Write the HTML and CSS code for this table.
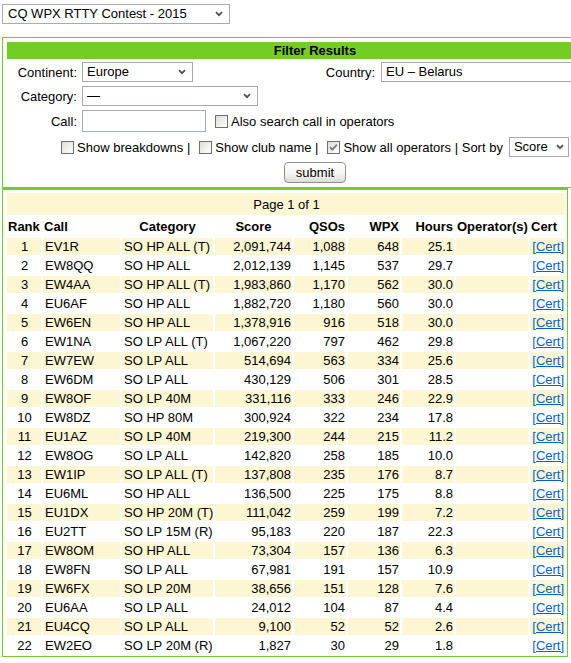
FILE: index.html
```html
<!DOCTYPE html>
<html>
<head>
<meta charset="utf-8">
<link rel="stylesheet" href="styles.css">
</head>
<body>
<div class="page">
  <div class="select sel-contest"><span>CQ WPX RTTY Contest - 2015</span><svg class="chev" width="8" height="6" viewBox="0 0 8 6"><path d="M1 1.2 L4 4.2 L7 1.2" fill="none" stroke="#505050" stroke-width="1.8"/></svg></div>

  <div class="filter">
    <div class="filter-head">Filter Results</div>
    <div class="filter-grid">
      <span class="lbl">Continent:</span>
      <div class="select sel-continent"><span>Europe</span><svg class="chev" width="8" height="6" viewBox="0 0 8 6"><path d="M1 1.2 L4 4.2 L7 1.2" fill="none" stroke="#505050" stroke-width="1.8"/></svg></div>
      <span class="lbl">Country:</span>
      <div class="select sel-country"><span>EU – Belarus</span></div>

      <span class="lbl">Category:</span>
      <div class="wide"><div class="select sel-cat"><span>—</span><svg class="chev" width="8" height="6" viewBox="0 0 8 6"><path d="M1 1.2 L4 4.2 L7 1.2" fill="none" stroke="#505050" stroke-width="1.8"/></svg></div></div>

      <span class="lbl">Call:</span>
      <div class="wide call-row"><span class="input"></span><span class="cb"></span><span>Also search call in operators</span></div>

      <div class="full options">
        <span class="cb"></span><span>Show breakdowns |</span>
        <span class="cb cb-gap"></span><span>Show club name |</span>
        <span class="cb cb-gap checked"><svg width="11" height="11" viewBox="0 0 11 11"><path d="M2 5.2 L4.3 7.6 L9 2.6" fill="none" stroke="#7a7a7a" stroke-width="1.8"/></svg></span><span>Show all operators | Sort by</span>
        <div class="select sel-sort"><span>Score</span><svg class="chev" width="8" height="6" viewBox="0 0 8 6"><path d="M1 1.2 L4 4.2 L7 1.2" fill="none" stroke="#505050" stroke-width="1.8"/></svg></div>
      </div>
      <div class="full submit-row"><span class="button">submit</span></div>
    </div>
  </div>

  <div class="results">
    <table class="res">
      <colgroup>
        <col class="c-rank"><col class="c-call"><col class="c-cat"><col class="c-score"><col class="c-qso"><col class="c-wpx"><col class="c-hrs"><col class="c-op"><col class="c-cert">
      </colgroup>
      <tr class="pagebar"><td colspan="9">Page 1 of 1</td></tr>
      <tr class="head">
        <th class="l">Rank</th><th class="l">Call</th><th>Category</th><th>Score</th><th class="r">QSOs</th><th class="r">WPX</th><th class="r">Hours</th><th>Operator(s)</th><th class="l">Cert</th>
      </tr>
      <tr class="odd"><td class="c">1</td><td>EV1R</td><td>SO HP ALL (T)</td><td class="r">2,091,744</td><td class="r">1,088</td><td class="r">648</td><td class="r">25.1</td><td></td><td class="cert"><a href="#">[Cert]</a></td></tr>
      <tr><td class="c">2</td><td>EW8QQ</td><td>SO HP ALL</td><td class="r">2,012,139</td><td class="r">1,145</td><td class="r">537</td><td class="r">29.7</td><td></td><td class="cert"><a href="#">[Cert]</a></td></tr>
      <tr class="odd"><td class="c">3</td><td>EW4AA</td><td>SO HP ALL (T)</td><td class="r">1,983,860</td><td class="r">1,170</td><td class="r">562</td><td class="r">30.0</td><td></td><td class="cert"><a href="#">[Cert]</a></td></tr>
      <tr><td class="c">4</td><td>EU6AF</td><td>SO HP ALL</td><td class="r">1,882,720</td><td class="r">1,180</td><td class="r">560</td><td class="r">30.0</td><td></td><td class="cert"><a href="#">[Cert]</a></td></tr>
      <tr class="odd"><td class="c">5</td><td>EW6EN</td><td>SO HP ALL</td><td class="r">1,378,916</td><td class="r">916</td><td class="r">518</td><td class="r">30.0</td><td></td><td class="cert"><a href="#">[Cert]</a></td></tr>
      <tr><td class="c">6</td><td>EW1NA</td><td>SO LP ALL (T)</td><td class="r">1,067,220</td><td class="r">797</td><td class="r">462</td><td class="r">29.8</td><td></td><td class="cert"><a href="#">[Cert]</a></td></tr>
      <tr class="odd"><td class="c">7</td><td>EW7EW</td><td>SO LP ALL</td><td class="r">514,694</td><td class="r">563</td><td class="r">334</td><td class="r">25.6</td><td></td><td class="cert"><a href="#">[Cert]</a></td></tr>
      <tr><td class="c">8</td><td>EW6DM</td><td>SO LP ALL</td><td class="r">430,129</td><td class="r">506</td><td class="r">301</td><td class="r">28.5</td><td></td><td class="cert"><a href="#">[Cert]</a></td></tr>
      <tr class="odd"><td class="c">9</td><td>EW8OF</td><td>SO LP 40M</td><td class="r">331,116</td><td class="r">333</td><td class="r">246</td><td class="r">22.9</td><td></td><td class="cert"><a href="#">[Cert]</a></td></tr>
      <tr><td class="c">10</td><td>EW8DZ</td><td>SO HP 80M</td><td class="r">300,924</td><td class="r">322</td><td class="r">234</td><td class="r">17.8</td><td></td><td class="cert"><a href="#">[Cert]</a></td></tr>
      <tr class="odd"><td class="c">11</td><td>EU1AZ</td><td>SO LP 40M</td><td class="r">219,300</td><td class="r">244</td><td class="r">215</td><td class="r">11.2</td><td></td><td class="cert"><a href="#">[Cert]</a></td></tr>
      <tr><td class="c">12</td><td>EW8OG</td><td>SO LP ALL</td><td class="r">142,820</td><td class="r">258</td><td class="r">185</td><td class="r">10.0</td><td></td><td class="cert"><a href="#">[Cert]</a></td></tr>
      <tr class="odd"><td class="c">13</td><td>EW1IP</td><td>SO LP ALL (T)</td><td class="r">137,808</td><td class="r">235</td><td class="r">176</td><td class="r">8.7</td><td></td><td class="cert"><a href="#">[Cert]</a></td></tr>
      <tr><td class="c">14</td><td>EU6ML</td><td>SO HP ALL</td><td class="r">136,500</td><td class="r">225</td><td class="r">175</td><td class="r">8.8</td><td></td><td class="cert"><a href="#">[Cert]</a></td></tr>
      <tr class="odd"><td class="c">15</td><td>EU1DX</td><td>SO HP 20M (T)</td><td class="r">111,042</td><td class="r">259</td><td class="r">199</td><td class="r">7.2</td><td></td><td class="cert"><a href="#">[Cert]</a></td></tr>
      <tr><td class="c">16</td><td>EU2TT</td><td>SO LP 15M (R)</td><td class="r">95,183</td><td class="r">220</td><td class="r">187</td><td class="r">22.3</td><td></td><td class="cert"><a href="#">[Cert]</a></td></tr>
      <tr class="odd"><td class="c">17</td><td>EW8OM</td><td>SO HP ALL</td><td class="r">73,304</td><td class="r">157</td><td class="r">136</td><td class="r">6.3</td><td></td><td class="cert"><a href="#">[Cert]</a></td></tr>
      <tr><td class="c">18</td><td>EW8FN</td><td>SO LP ALL</td><td class="r">67,981</td><td class="r">191</td><td class="r">157</td><td class="r">10.9</td><td></td><td class="cert"><a href="#">[Cert]</a></td></tr>
      <tr class="odd"><td class="c">19</td><td>EW6FX</td><td>SO LP 20M</td><td class="r">38,656</td><td class="r">151</td><td class="r">128</td><td class="r">7.6</td><td></td><td class="cert"><a href="#">[Cert]</a></td></tr>
      <tr><td class="c">20</td><td>EU6AA</td><td>SO LP ALL</td><td class="r">24,012</td><td class="r">104</td><td class="r">87</td><td class="r">4.4</td><td></td><td class="cert"><a href="#">[Cert]</a></td></tr>
      <tr class="odd"><td class="c">21</td><td>EU4CQ</td><td>SO LP ALL</td><td class="r">9,100</td><td class="r">52</td><td class="r">52</td><td class="r">2.6</td><td></td><td class="cert"><a href="#">[Cert]</a></td></tr>
      <tr><td class="c">22</td><td>EW2EO</td><td>SO LP 20M (R)</td><td class="r">1,827</td><td class="r">30</td><td class="r">29</td><td class="r">1.8</td><td></td><td class="cert"><a href="#">[Cert]</a></td></tr>
    </table>
  </div>
</div>
</body>
</html>
```

FILE: styles.css
```css
html, body {
  margin: 0;
  padding: 0;
  overflow: hidden;
  background: #fff;
}
body {
  font-family: "Liberation Sans", Arial, sans-serif;
  font-size: 13px;
  color: #000;
}
.page {
  padding: 4px 0 0 2px;
}

/* select-like boxes */
.select {
  box-sizing: border-box;
  height: 20px;
  border: 1px solid #a9a9a9;
  background: #fff;
  display: flex;
  align-items: center;
  justify-content: space-between;
  padding: 0 6px 0 4px;
  line-height: 18px;
  white-space: nowrap;
}
.chev {
  flex: none;
}
.sel-contest {
  width: 228px;
  padding-left: 5px;
}

/* filter box */
.filter {
  margin-top: 13px;
  width: 616px;
  border: 1px solid #74cc26;
  padding: 4px 4px 4px 4px;
}
.filter-head {
  background: #74cc26;
  height: 17px;
  line-height: 17px;
  text-align: center;
  font-weight: bold;
}
.filter-grid {
  margin-top: 3px;
  display: grid;
  grid-template-columns: 75px 230px 69px 1fr;
  grid-template-rows: 20px 20px 22px 21px 22px;
  row-gap: 4px;
  align-items: center;
}
.lbl {
  text-align: right;
  padding-right: 5px;
}
.lbl:nth-of-type(2) {
  padding-right: 6px;
}
.sel-continent {
  width: 111px;
}
.sel-country {
  width: 240px;
}
.wide {
  grid-column: 2 / 5;
  display: flex;
  align-items: center;
}
.sel-cat {
  width: 176px;
}
.input {
  box-sizing: border-box;
  width: 124px;
  height: 22px;
  border: 1px solid #a5acb2;
  background: #fff;
}
.cb {
  box-sizing: border-box;
  width: 13px;
  height: 13px;
  border: 1px solid #6f6f6f;
  background: linear-gradient(135deg, #dcdcd7 0%, #f6f6f4 70%, #fff 100%);
  margin: 0 3px 0 9px;
  display: inline-flex;
  align-items: center;
  justify-content: center;
  flex: none;
}
.full {
  grid-column: 1 / 5;
  display: flex;
  justify-content: center;
  align-items: center;
  align-self: end;
}
.options {
  white-space: nowrap;
}
.options .cb {
  margin: 0 3px 0 0;
}
.options .cb-gap {
  margin-left: 9px;
}
.sel-sort {
  width: 60px;
  margin-left: 6px;
  padding-right: 4px;
}
.button {
  box-sizing: border-box;
  width: 62px;
  height: 21px;
  border: 1px solid #8e8f8f;
  border-radius: 4px;
  background: linear-gradient(#ffffff, #f3f3ef 60%, #dcdcd5);
  display: flex;
  align-items: center;
  justify-content: center;
  line-height: 19px;
}

/* results */
.results {
  width: 562px;
  border: 1px solid #74cc26;
  border-top-width: 2px;
  padding: 1px 0 0 2px;
}
.res {
  table-layout: fixed;
  width: 562px;
  border-collapse: separate;
  border-spacing: 2px;
  font-size: 13px;
}
.c-rank { width: 34px; }
.c-call { width: 77px; }
.c-cat { width: 91px; }
.c-score { width: 77px; }
.c-qso { width: 52px; }
.c-wpx { width: 52px; }
.c-hrs { width: 52px; }
.c-op { width: 72px; }
.c-cert { width: 35px; }

.res td, .res th {
  padding: 0 1px 0 2px;
  height: 17px;
  line-height: 17px;
  white-space: nowrap;
  overflow: hidden;
}
.pagebar td {
  background: #fdf6d2;
  height: 22px;
  text-align: center;
}
.head th {
  height: 19px;
  font-weight: bold;
  text-align: center;
  padding: 0 1px;
}
.head th.l { text-align: left; }
.head th.r { text-align: right; }
.head th:first-child { padding-left: 1px; }
.odd td {
  background: #fdf6d2;
}
.res td.c { text-align: center; }
.res td.r { text-align: right; }
.res td.cert {
  text-align: right;
  padding: 0 1px 0 0;
}
.res td.cert a {
  color: #0563c9;
  text-decoration: underline;
}
```
